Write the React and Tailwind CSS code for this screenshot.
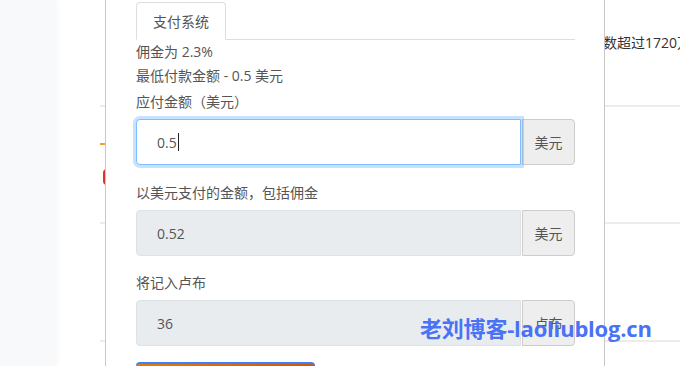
import React from "react";

const font = { fontFamily: '"Open Sans", "Noto Sans CJK SC", sans-serif' };

function Group({ value, unit, focused, caret }) {
  return (
    <div className="flex h-[46px]">
      <div
        className={
          focused
            ? "relative z-10 flex flex-1 items-center rounded-l-[4px] border border-[#80bdff] bg-white pl-[20px] shadow-[0_0_0_3px_rgba(0,123,255,0.22)]"
            : "flex flex-1 items-center rounded-l-[4px] border border-[#dfe2e5] bg-[#e9ecef] pl-[20px]"
        }
      >
        <span className="text-[14px] text-[#555]">{value}</span>
        {caret && <span className="ml-[1px] h-[18px] w-px bg-[#222]" />}
      </div>
      <div className="ml-px flex w-[53px] items-center justify-center rounded-r-[4px] border border-[#ccc] bg-[#eee] text-[14px] text-[#555]">
        {unit}
      </div>
    </div>
  );
}

export default function App() {
  return (
    <div className="relative flex h-[366px] w-[680px] overflow-hidden bg-white" style={font}>
      {/* background page */}
      <div className="w-[55px] shrink-0 bg-[#f7f9fb] shadow-[2px_0_4px_rgba(0,0,0,0.04)]" />
      <div className="flex min-w-0 flex-1 flex-col pl-[45px]">
        <div className="flex h-[107px] shrink-0 border-b-2 border-[#ececec] pl-[503px] pt-[34px]">
          <span className="whitespace-nowrap text-[14px] leading-[18px] text-[#333]">数超过1720万</span>
        </div>
        <div className="flex h-[117px] shrink-0 flex-col gap-[24px] border-b-2 border-[#ececec] pt-[36px]">
          <div className="h-[2px] w-[6px] bg-[#f0a030]" />
          <div className="ml-[3px] h-[16px] w-[8px] rounded-full bg-[#d9362b]" />
        </div>
        <div className="h-[118px] shrink-0 border-b-2 border-[#ececec]" />
      </div>

      {/* modal */}
      <div className="absolute left-[105px] top-0 h-[366px] w-[500px] border-x border-[#c8c8c8] bg-white pl-[30px] pr-[29px]">
        <div className="flex h-[40px] items-end border-b border-[#dedede]">
          <div className="-mb-px flex h-[38px] w-[90px] items-center justify-center rounded-t-[4px] border border-[#dedede] border-b-white bg-white text-[14px] text-[#555]">
            支付系统
          </div>
        </div>
        <div className="text-[14px] text-[#555]">
          <div className="flex h-[22px] items-center">佣金为 2.3%</div>
          <div className="flex h-[27px] items-center">最低付款金额 - 0.5 美元</div>
          <div className="flex h-[25px] items-center">应付金额（美元）</div>
        </div>
        <div className="mt-[5px]">
          <Group value="0.5" unit="美元" focused caret />
        </div>
        <div className="mt-[17px] flex h-[20px] items-center text-[14px] text-[#555]">以美元支付的金额，包括佣金</div>
        <div className="mt-[8px]">
          <Group value="0.52" unit="美元" />
        </div>
        <div className="mt-[16px] flex h-[20px] items-center text-[14px] text-[#555]">将记入卢布</div>
        <div className="mt-[8px]">
          <Group value="36" unit="卢布" />
        </div>
        <div className="mt-[16px] h-[20px] w-[179px] rounded-t-[4px] border-t-2 border-[#3b82f6] bg-gradient-to-r from-[#e8770c] to-[#d9520a]" />
      </div>

      {/* watermark */}
      <div className="absolute left-[420px] top-[313px] whitespace-nowrap text-[22px] font-bold leading-[30px] tracking-[-0.2px] text-[#4a72f5]">
        老刘博客-laoliublog.cn
      </div>
    </div>
  );
}
